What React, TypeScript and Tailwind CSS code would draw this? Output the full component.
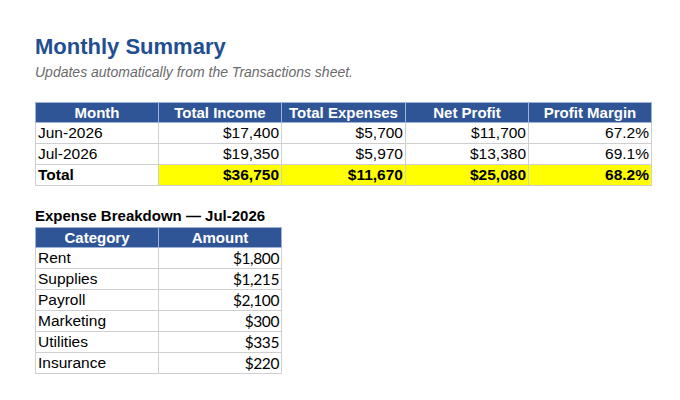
import React from "react";

const SUMMARY = [
  { month: "Jun-2026", income: "$17,400", expenses: "$5,700", profit: "$11,700", margin: "67.2%" },
  { month: "Jul-2026", income: "$19,350", expenses: "$5,970", profit: "$13,380", margin: "69.1%" },
];

const TOTAL = { income: "$36,750", expenses: "$11,670", profit: "$25,080", margin: "68.2%" };

const BREAKDOWN = [
  { category: "Rent", amount: "$1,800" },
  { category: "Supplies", amount: "$1,215" },
  { category: "Payroll", amount: "$2,100" },
  { category: "Marketing", amount: "$300" },
  { category: "Utilities", amount: "$335" },
  { category: "Insurance", amount: "$220" },
];

const HEADERS = ["Month", "Total Income", "Total Expenses", "Net Profit", "Profit Margin"];

const th = "h-[20px] p-0 border border-[#9fb3d6] bg-[#2f5597] text-white font-bold text-[15px] leading-[18px] text-center";
const td = "h-[21px] p-0 px-[2px] border border-[#cfcfcf] text-[15.5px] leading-[18px] text-black";

export default function App() {
  return (
    <div className="w-[680px] h-[400px] bg-white pl-[35px] pt-[34px] font-['Liberation_Sans',Arial,sans-serif]">
      <h1 className="text-[22px] leading-[26px] font-bold text-[#1f4e91]">Monthly Summary</h1>
      <p className="mt-[2px] text-[14px] leading-[20px] italic text-[#6b6b6b]">
        Updates automatically from the Transactions sheet.
      </p>

      <table className="mt-[20px] w-[616px] table-fixed border-collapse">
        <colgroup>
          <col className="w-[123px]" />
          <col className="w-[123px]" />
          <col className="w-[124px]" />
          <col className="w-[123px]" />
          <col className="w-[123px]" />
        </colgroup>
        <thead>
          <tr>
            {HEADERS.map((h) => (
              <th key={h} className={th}>
                {h}
              </th>
            ))}
          </tr>
        </thead>
        <tbody>
          {SUMMARY.map((r) => (
            <tr key={r.month}>
              <td className={`${td} text-left`}>{r.month}</td>
              <td className={`${td} text-right`}>{r.income}</td>
              <td className={`${td} text-right`}>{r.expenses}</td>
              <td className={`${td} text-right`}>{r.profit}</td>
              <td className={`${td} text-right`}>{r.margin}</td>
            </tr>
          ))}
          <tr className="font-bold">
            <td className={`${td} text-left`}>Total</td>
            <td className={`${td} text-right bg-[#ffff00]`}>{TOTAL.income}</td>
            <td className={`${td} text-right bg-[#ffff00]`}>{TOTAL.expenses}</td>
            <td className={`${td} text-right bg-[#ffff00]`}>{TOTAL.profit}</td>
            <td className={`${td} text-right bg-[#ffff00]`}>{TOTAL.margin}</td>
          </tr>
        </tbody>
      </table>

      <h2 className="mt-[21px] text-[15px] leading-[18px] font-bold text-black">
        Expense Breakdown — Jul-2026
      </h2>
      <table className="mt-[2px] w-[246px] table-fixed border-collapse">
        <colgroup>
          <col className="w-[123px]" />
          <col className="w-[123px]" />
        </colgroup>
        <thead>
          <tr>
            <th className={th}>Category</th>
            <th className={th}>Amount</th>
          </tr>
        </thead>
        <tbody>
          {BREAKDOWN.map((r) => (
            <tr key={r.category}>
              <td className={`${td} text-left`}>{r.category}</td>
              <td className={`${td} text-right font-['Lato',sans-serif] text-[14px] tracking-[-0.4px]`}>
                {r.amount}
              </td>
            </tr>
          ))}
        </tbody>
      </table>
    </div>
  );
}
